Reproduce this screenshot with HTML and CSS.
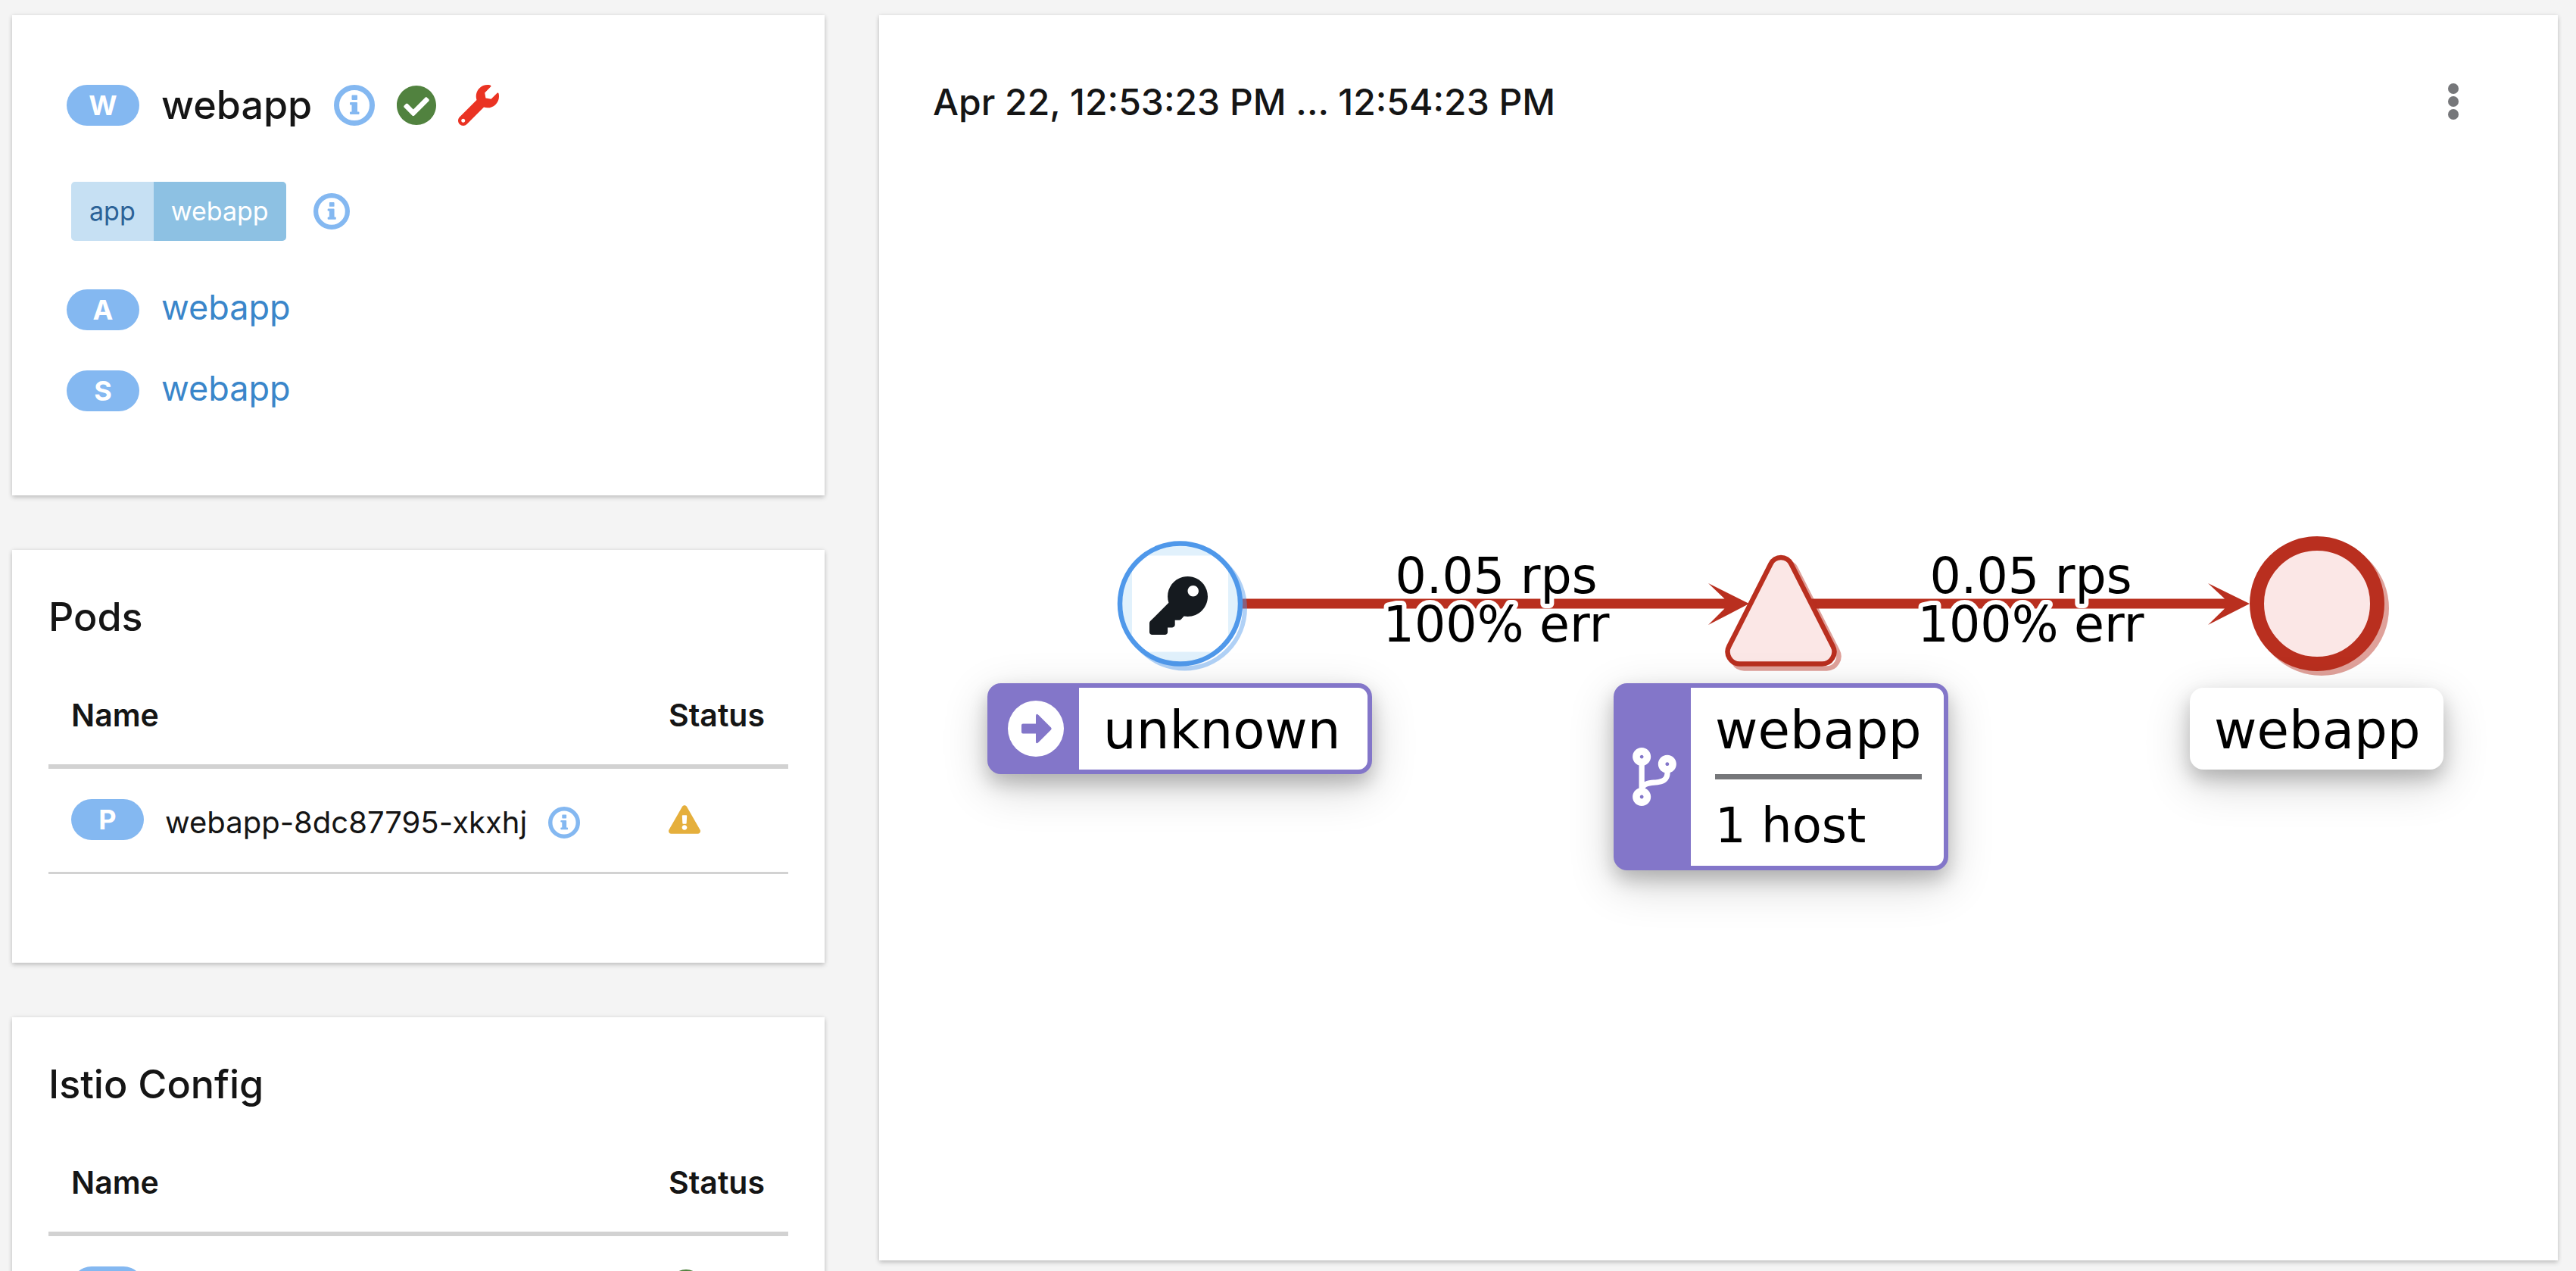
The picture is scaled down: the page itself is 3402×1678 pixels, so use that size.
FILE: index.html
```html
<!DOCTYPE html>
<html lang="en">
<head>
<meta charset="utf-8">
<title>webapp</title>
<link rel="stylesheet" href="styles.css">
</head>
<body>
<svg class="defs" aria-hidden="true">
  <symbol id="icon-info" viewBox="0 0 54 54">
    <circle cx="27" cy="27" r="23.5" fill="none" stroke="currentColor" stroke-width="7"/>
    <path fill="currentColor" d="M24.500 13.500h5.500a1 1 0 0 1 1 1v4.500a1 1 0 0 1-1 1h-5.500a1 1 0 0 1-1-1v-4.500a1 1 0 0 1 1-1zM22 23h8a1 1 0 0 1 1 1v11.500h1.500a1 1 0 0 1 1 1v1.500a1 1 0 0 1-1 1h-10.500a1 1 0 0 1-1-1v-1.500a1 1 0 0 1 1-1h1.500v-9h-1.500a1 1 0 0 1-1-1v-1.500a1 1 0 0 1 1-1z"/>
  </symbol>
  <symbol id="icon-check" viewBox="8 8 496 496">
    <path fill="currentColor" d="M504 256c0 136.967-111.033 248-248 248S8 392.967 8 256 119.033 8 256 8s248 111.033 248 248zM227.314 387.314l184-184c6.248-6.248 6.248-16.379 0-22.627l-22.627-22.627c-6.248-6.249-16.379-6.249-22.628 0L216 308.118l-70.059-70.059c-6.248-6.248-16.379-6.248-22.628 0l-22.627 22.627c-6.248 6.248-6.248 16.379 0 22.627l104 104c6.249 6.249 16.379 6.249 22.628.001z"/>
  </symbol>
</svg>

<main class="layout">
  <div class="side">
    <section class="card summary">
      <div class="title-row">
        <span class="pill">W</span>
        <h1>webapp</h1>
        <svg class="icon-lg info" role="img" aria-label="Info"><use href="#icon-info"/></svg>
        <svg class="icon-check ok" role="img" aria-label="Healthy"><use href="#icon-check"/></svg>
        <svg class="icon-lg wrench" viewBox="0 0 512 512" role="img" aria-label="Actions"><path fill="currentColor" d="M507.73 109.100c-2.240-9.030-13.540-12.090-20.120-5.510l-74.360 74.360-67.880-11.310-11.310-67.880 74.360-74.360c6.620-6.620 3.430-17.900-5.660-20.160-47.380-11.740-99.550.910-136.580 37.930-39.640 39.640-50.550 97.100-34.050 147.200L18.740 402.760c-24.990 24.990-24.990 65.510 0 90.500 24.990 24.990 65.510 24.990 90.500 0l213.210-213.210c50.120 16.710 107.470 5.680 147.370-34.220 37.070-37.070 49.700-89.320 37.910-136.730zM64 472c-13.250 0-24-10.750-24-24 0-13.260 10.750-24 24-24s24 10.740 24 24c0 13.250-10.750 24-24 24z"/></svg>
      </div>
      <div class="label-row">
        <span class="label"><span class="label-key">app</span><span class="label-value">webapp</span></span>
        <svg class="icon-md info" role="img" aria-label="Info"><use href="#icon-info"/></svg>
      </div>
      <ul class="links">
        <li><span class="pill">A</span><a href="#app">webapp</a></li>
        <li><span class="pill">S</span><a href="#service">webapp</a></li>
      </ul>
    </section>

    <section class="card list">
      <h2>Pods</h2>
      <table>
        <thead><tr><th scope="col">Name</th><th scope="col" class="col-status">Status</th></tr></thead>
        <tbody>
          <tr>
            <td><div class="name-cell"><span class="pill">P</span><span>webapp-8dc87795-xkxhj</span><svg class="icon-sm info" role="img" aria-label="Info"><use href="#icon-info"/></svg></div></td>
            <td><div class="status-cell"><svg class="warning" viewBox="0 0 576 512" role="img" aria-label="Warning"><path fill="currentColor" d="M569.517 440.013C587.975 472.007 564.806 512 527.940 512H48.054c-36.937 0-59.999-40.055-41.577-71.987L246.423 23.985c18.467-32.009 64.720-31.951 83.154 0l239.940 416.028zM288 354c-25.405 0-46 20.595-46 46s20.595 46 46 46 46-20.595 46-46-20.595-46-46-46zm-43.673-165.346l7.418 136c.347 6.364 5.609 11.346 11.982 11.346h48.546c6.373 0 11.635-4.982 11.982-11.346l7.418-136c.375-6.874-5.098-12.654-11.982-12.654h-63.383c-6.884 0-12.356 5.780-11.981 12.654z"/></svg></div></td>
          </tr>
        </tbody>
      </table>
    </section>

    <section class="card list">
      <h2>Istio Config</h2>
      <table>
        <thead><tr><th scope="col">Name</th><th scope="col" class="col-status">Status</th></tr></thead>
        <tbody>
          <tr>
            <td><div class="name-cell"><span class="pill"></span></div></td>
            <td><div class="status-cell"><svg class="icon-valid ok" role="img" aria-label="Valid"><use href="#icon-check"/></svg></div></td>
          </tr>
        </tbody>
      </table>
    </section>
  </div>

  <section class="card graph-card">
    <header class="graph-header">
      <h2>Apr 22, 12:53:23 PM ... 12:54:23 PM</h2>
      <button type="button" class="kebab" aria-label="Graph actions">
        <svg viewBox="0 0 14 48"><circle cx="7" cy="7" r="7"/><circle cx="7" cy="24" r="7"/><circle cx="7" cy="41" r="7"/></svg>
      </button>
    </header>
    <div class="graph">
      <div class="stage">
        <svg class="edges" viewBox="1304 700 1931 450">
          <g fill="#b92f1f">
            <path d="M1641 790.500H2277.500L2256 770 2310 797 2256 825 2277.500 803.500H1641z"/>
            <path d="M2390 790.500H2938L2916 770 2971 797 2916 825 2938 803.500H2390z"/>
          </g>
          <circle cx="1564.500" cy="803" r="79.500" fill="none" stroke="#4f98ea" stroke-opacity=".45" stroke-width="6"/>
          <circle cx="1558.500" cy="797" r="79.500" fill="#e1f1fc"/>
          <clipPath id="key-clip"><circle cx="1558.500" cy="797" r="78"/></clipPath>
          <rect x="1495" y="733.500" width="127" height="127" fill="#fff" clip-path="url(#key-clip)"/>
          <circle cx="1558.500" cy="797" r="79.500" fill="none" stroke="#4f98ea" stroke-width="6.500"/>
          <svg x="1518" y="761" width="77" height="77" viewBox="0 0 512 512"><path fill="#151a1f" d="M512 176.001C512 273.203 433.202 352 336 352c-11.220 0-22.190-1.062-32.827-3.069l-24.012 27.014A23.999 23.999 0 0 1 261.223 384H224v40c0 13.255-10.745 24-24 24h-40v40c0 13.255-10.745 24-24 24H24c-13.255 0-24-10.745-24-24v-78.059c0-6.365 2.529-12.470 7.029-16.971l161.802-161.802C163.108 213.814 160 195.271 160 176 160 78.798 238.797.001 335.999 0 433.488-.001 512 78.511 512 176.001zM336 128c0 26.510 21.490 48 48 48s48-21.490 48-48-21.490-48-48-48-48 21.490-48 48z"/></svg>

          <path fill="none" stroke="#b92f1f" stroke-opacity=".45" stroke-width="6.500" transform="translate(6 6)" d="M2298 876.500H2406A16 16 0 0 0 2420.500 853L2365.500 744.500A15 15 0 0 0 2338.500 744.500L2283.500 853A16 16 0 0 0 2298 876.500z"/>
          <path fill="#fbe7e6" stroke="#b92f1f" stroke-width="6.500" d="M2298 876.500H2406A16 16 0 0 0 2420.500 853L2365.500 744.500A15 15 0 0 0 2338.500 744.500L2283.500 853A16 16 0 0 0 2298 876.500z"/>

          <circle cx="3066" cy="803" r="79.500" fill="none" stroke="#b92f1f" stroke-opacity=".45" stroke-width="19"/>
          <circle cx="3060" cy="797" r="79.500" fill="#fbe7e6" stroke="#b92f1f" stroke-width="19"/>

          <g class="edge-text">
            <text><tspan x="1976" y="783">0.05 rps</tspan><tspan x="1976" y="847">100% err</tspan></text>
            <text><tspan x="2682" y="783">0.05 rps</tspan><tspan x="2682" y="847">100% err</tspan></text>
          </g>
        </svg>

        <div class="node-label badged node-unknown">
          <span class="badge"><svg class="badge-arrow" viewBox="0 0 74 74"><circle cx="37" cy="37" r="37" fill="#fff"/><path fill="#8376c9" d="M20 30.500H37V20.500Q37 16 40.500 19L57 35.500Q58.500 37 57 38.500L40.500 55Q37 58 37 54V43.500H20Q18 43.500 18 41.500V32.500Q18 30.500 20 30.500z"/></svg></span>
          <span class="node-text">unknown</span>
        </div>

        <div class="node-label badged node-service">
          <span class="badge badge-narrow"><svg class="badge-branch" viewBox="0 0 384 512"><path fill="#fff" d="M384 144c0-44.200-35.800-80-80-80s-80 35.800-80 80c0 36.400 24.300 67.100 57.500 76.800-.6 16.100-4.200 28.500-11 36.900-15.400 19.200-49.300 22.400-85.200 25.700-28.200 2.600-57.400 5.400-81.300 16.900v-144c32.500-10.200 56-40.500 56-76.300 0-44.200-35.800-80-80-80S0 35.800 0 80c0 35.800 23.500 66.100 56 76.300v199.300C23.500 365.900 0 396.200 0 432c0 44.200 35.800 80 80 80s80-35.800 80-80c0-34-21.200-63.100-51.200-74.600 3.100-5.200 7.800-9.800 14.900-13.400 16.200-8.200 40.400-10.400 66.100-12.800 42.200-3.900 90-8.400 118.200-43.400 14-17.400 21.100-39.800 21.600-67.900 31.600-10.800 54.400-40.700 54.400-75.900zM80 64c8.800 0 16 7.200 16 16s-7.200 16-16 16-16-7.200-16-16 7.200-16 16-16zm0 384c-8.800 0-16-7.200-16-16s7.200-16 16-16 16 7.200 16 16-7.200 16-16 16zm224-320c8.800 0 16 7.200 16 16s-7.200 16-16 16-16-7.200-16-16 7.200-16 16-16z"/></svg></span>
          <span class="node-text">webapp<span class="hosts">1 host</span></span>
        </div>

        <div class="node-label node-workload"><span class="node-text">webapp</span></div>
      </div>
    </div>
  </section>
</main>
</body>
</html>
```
FILE: styles.css
```css
* {
  box-sizing: border-box;
}

body {
  margin: 0;
  background: #f4f4f4;
  color: #151515;
  font-family: Inter, "Open Sans", sans-serif;
}

h1,
h2,
ul {
  margin: 0;
  padding: 0;
}

h1,
h2 {
  font-size: 52px;
  line-height: 64px;
  font-weight: 500;
}

svg {
  display: block;
  flex: none;
}

.defs {
  position: absolute;
  width: 0;
  height: 0;
}

.layout {
  display: grid;
  grid-template-columns: 1073fr 2217fr;
  column-gap: 72px;
  height: 100vh;
  padding: 20px 24px 0 16px;
  overflow: hidden;
}

.side {
  display: flex;
  flex-direction: column;
  gap: 72px;
  min-width: 0;
}

.card {
  background: #fff;
  box-shadow: 0 3px 6px rgba(3, 3, 3, 0.18), 0 0 6px rgba(3, 3, 3, 0.08);
}

.pill {
  flex: none;
  width: 96px;
  height: 54px;
  border-radius: 27px;
  background: #84b8f1;
  color: #fff;
  font-size: 36px;
  line-height: 54px;
  font-weight: 700;
  text-align: center;
}

.icon-lg {
  width: 54px;
  height: 54px;
}

.icon-check {
  width: 52px;
  height: 52px;
}

.icon-md {
  width: 48px;
  height: 48px;
}

.icon-sm {
  width: 42px;
  height: 42px;
}

.icon-valid {
  width: 46px;
  height: 46px;
}

.info {
  color: #84b8f1;
}

.ok {
  color: #51823f;
}

.wrench {
  color: #ea3323;
}

.warning {
  width: 42px;
  height: 38px;
  color: #e5af3c;
}

.summary {
  padding: 87px 72px 111px;
}

.title-row {
  display: flex;
  align-items: center;
  gap: 29px;
}

.label-row {
  display: flex;
  align-items: center;
  gap: 36px;
  margin: 69px 0 64px;
  padding-left: 6px;
}

.label {
  display: flex;
  border-radius: 5px;
  overflow: hidden;
  font-size: 34px;
  line-height: 78px;
}

.label-key {
  padding: 0 24px;
  background: #c6e0f3;
  color: #2b6297;
}

.label-value {
  padding: 0 23px;
  background: #8dc1e3;
  color: #fff;
}

.links {
  display: flex;
  flex-direction: column;
  gap: 53px;
  list-style: none;
}

.links li {
  display: flex;
  align-items: flex-start;
  gap: 29px;
}

.links a {
  color: #3a86ca;
  font-size: 45px;
  line-height: 48px;
  text-decoration: none;
}

.list {
  padding: 57px 48px 117px;
}

table {
  width: 100%;
  margin-top: 33px;
  border-collapse: separate;
  border-spacing: 0;
  table-layout: fixed;
}

th {
  padding: 40px 30px 41px;
  border-bottom: 6px solid #d2d2d2;
  font-size: 41px;
  line-height: 48px;
  font-weight: 600;
  text-align: left;
}

.col-status {
  width: 188px;
  white-space: nowrap;
}

td {
  padding: 40px 30px 34px;
  border-bottom: 3px solid #d2d2d2;
  vertical-align: top;
}

.name-cell {
  display: flex;
  align-items: center;
  gap: 28px;
  height: 62px;
  font-size: 40px;
  line-height: 48px;
  white-space: nowrap;
}

.name-cell .pill {
  align-self: flex-start;
}

.status-cell {
  display: flex;
  align-items: center;
  height: 54px;
}

.graph-card {
  display: flex;
  flex-direction: column;
  min-width: 0;
  height: calc(100vh - 34px);
}

.graph-header {
  display: flex;
  align-items: flex-start;
  justify-content: space-between;
  height: 166px;
  padding: 83px 131px 0 71px;
}

.graph-header h2 {
  font-size: 48px;
}

.kebab {
  display: flex;
  align-items: center;
  height: 62px;
  padding: 0;
  border: 0;
  background: none;
}

.kebab svg {
  width: 14px;
  height: 48px;
  fill: #76777a;
}

.graph {
  display: flex;
  flex: 1;
  align-items: center;
  justify-content: center;
}

.stage {
  position: relative;
  flex: none;
  width: 1931px;
  height: 450px;
  color: #000;
  font-family: "DejaVu Sans", Verdana, sans-serif;
}

.edges {
  width: 100%;
  height: 100%;
  overflow: visible;
}

.edge-text {
  font-size: 65px;
  text-anchor: middle;
  fill: #000;
  stroke: #fff;
  stroke-width: 12px;
  stroke-linejoin: round;
  paint-order: stroke;
}

.node-label {
  position: absolute;
  display: flex;
  border-radius: 18px;
  background: #fff;
  box-shadow: 0 12px 24px rgba(0, 0, 0, 0.2), 0 18px 60px rgba(0, 0, 0, 0.19);
  font-size: 69px;
  line-height: 104px;
  white-space: nowrap;
}

.badged {
  border: 6px solid #8376c9;
}

.node-text {
  flex: 1;
  padding: 4px 32px 0;
}

.badge {
  display: flex;
  flex: none;
  align-items: center;
  justify-content: center;
  width: 115px;
  background: #8376c9;
}

.badge-narrow {
  width: 96px;
}

.badge-arrow {
  width: 74px;
  height: 74px;
}

.badge-branch {
  width: 58px;
  height: 77px;
}

.node-unknown {
  left: 0;
  top: 202px;
  width: 508px;
}

.node-service {
  left: 827px;
  top: 202px;
  width: 442px;
}

.node-workload {
  left: 1588px;
  top: 208px;
  width: 335px;
}

.hosts {
  display: block;
  margin-top: 6px;
  padding-top: 8px;
  border-top: 7px solid #76777a;
  font-size: 64px;
  line-height: 106px;
}
```
